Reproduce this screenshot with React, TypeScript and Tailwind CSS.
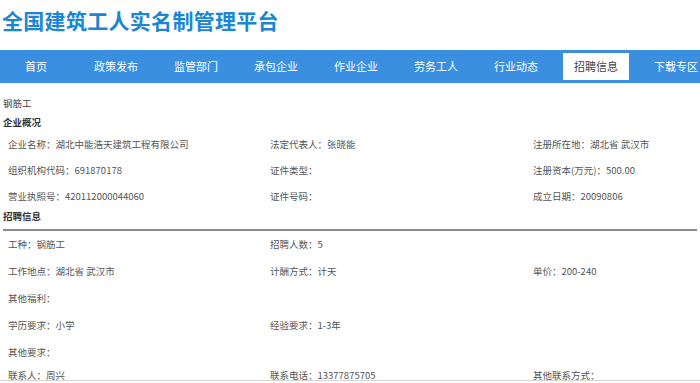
import React from 'react';

const navItems = ['首页', '政策发布', '监管部门', '承包企业', '作业企业', '劳务工人', '行业动态', '招聘信息', '下载专区'];

const companyRows: string[][] = [
  ['企业名称：湖北中能浩天建筑工程有限公司', '法定代表人：张晓能', '注册所在地：湖北省 武汉市'],
  ['组织机构代码：691870178', '证件类型：', '注册资本(万元)：500.00'],
  ['营业执照号：420112000044060', '证件号码：', '成立日期：20090806'],
];

const jobRows: string[][] = [
  ['工种：钢筋工', '招聘人数：5', ''],
  ['工作地点：湖北省 武汉市', '计酬方式：计天', '单价：200-240'],
  ['其他福利：', '', ''],
  ['学历要求：小学', '经验要求：1-3年', ''],
  ['其他要求：', '', ''],
];

const Row = ({ cells, h }: { cells: string[]; h: string }) => (
  <div className={`grid grid-cols-[262px_263px_1fr] items-center pl-[5px] text-[#555] ${h}`}>
    {cells.map((c, i) => (
      <div key={i} className="whitespace-nowrap">{c}</div>
    ))}
  </div>
);

const App = () => {
  return (
    <div
      className="w-[700px] h-[383px] overflow-hidden bg-white"
      style={{ fontFamily: '"Noto Sans CJK SC", "Noto Sans", sans-serif' }}
    >
      {/* Header */}
      <div className="h-[50px] pl-[2px] pt-[6px]">
        <h1 className="text-[21px] leading-[28px] font-bold text-[#1b86d3] tracking-[0.3px]">全国建筑工人实名制管理平台</h1>
      </div>

      {/* Nav */}
      <div className="h-[33px] bg-[#3b8fe0] flex items-center -ml-[4px]">
        {navItems.map((item) => (
          <div key={item} className="w-[80px] shrink-0 flex justify-center">
            {item === '招聘信息' ? (
              <div className="w-[66px] h-[27px] bg-white flex items-center justify-center text-[11px] text-[#444]">
                {item}
              </div>
            ) : (
              <div className="text-[11px] text-white">{item}</div>
            )}
          </div>
        ))}
      </div>

      {/* Content */}
      <div className="px-[3px] text-[9.5px]">
        <div className="mt-[10px] h-[20px] flex items-center text-[#444]">钢筋工</div>
        <div className="h-[18px] flex items-center font-bold text-[#333]">企业概况</div>
        {companyRows.map((r, i) => (
          <Row key={i} cells={r} h="h-[26px]" />
        ))}
        <div className="pb-[6px] leading-[14px] font-bold text-[#333] border-b-2 border-[#8c8c8c]">招聘信息</div>
        {jobRows.map((r, i) => (
          <Row key={i} cells={r} h="h-[27px]" />
        ))}
        <div className="h-[15px] border-b border-[#d6d6d6] -mx-[3px] px-[3px]">
          <div className="grid grid-cols-[262px_263px_1fr] pl-[5px] pt-[4px] leading-[11px] text-[#555]">
            <div className="whitespace-nowrap">联系人：周兴</div>
            <div className="whitespace-nowrap">联系电话：13377875705</div>
            <div className="whitespace-nowrap">其他联系方式：</div>
          </div>
        </div>
      </div>
    </div>
  );
};

export default App;
